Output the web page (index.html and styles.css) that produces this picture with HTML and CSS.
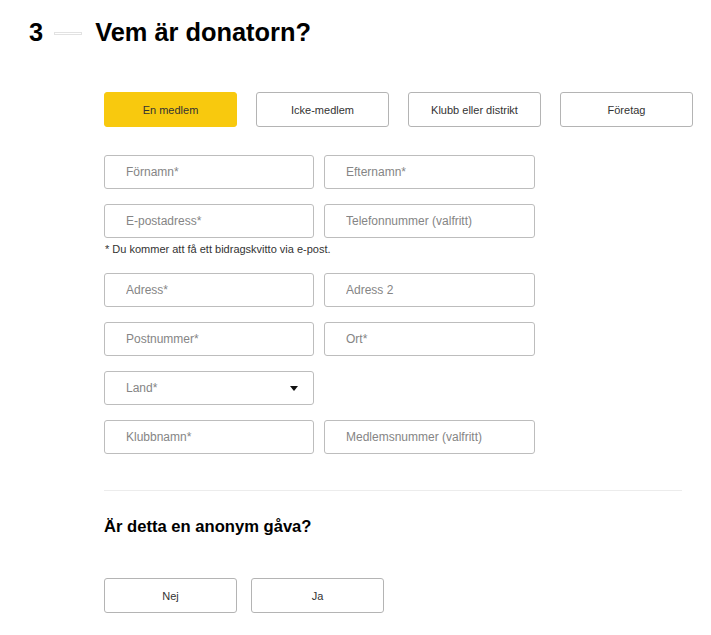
FILE: index.html
```html
<!DOCTYPE html>
<html>
<head>
  <link rel="stylesheet" href="styles.css">
</head>
<body>
  <div class="step">
    <span class="step-num">3</span>
    <span class="step-line"></span>
    <h1>Vem är donatorn?</h1>
  </div>

  <div class="form">
    <div class="tabs">
      <button class="tab active">En medlem</button>
      <button class="tab">Icke-medlem</button>
      <button class="tab">Klubb eller distrikt</button>
      <button class="tab">Företag</button>
    </div>

    <div class="row">
      <input type="text" class="field" placeholder="Förnamn*">
      <input type="text" class="field" placeholder="Efternamn*">
    </div>
    <div class="row row-tight">
      <input type="text" class="field" placeholder="E-postadress*">
      <input type="text" class="field" placeholder="Telefonnummer (valfritt)">
    </div>
    <p class="note">* Du kommer att få ett bidragskvitto via e-post.</p>
    <div class="row">
      <input type="text" class="field" placeholder="Adress*">
      <input type="text" class="field" placeholder="Adress 2">
    </div>
    <div class="row">
      <input type="text" class="field" placeholder="Postnummer*">
      <input type="text" class="field" placeholder="Ort*">
    </div>
    <div class="row">
      <div class="field select">
        <span>Land*</span>
        <span class="caret"></span>
      </div>
    </div>
    <div class="row">
      <input type="text" class="field" placeholder="Klubbnamn*">
      <input type="text" class="field" placeholder="Medlemsnummer (valfritt)">
    </div>

    <hr class="divider">

    <h2>Är detta en anonym gåva?</h2>
    <div class="choices">
      <button class="tab">Nej</button>
      <button class="tab">Ja</button>
    </div>
  </div>
</body>
</html>
```
FILE: styles.css
```css
body {
  margin: 0;
  background: #fff;
  font-family: "Liberation Sans", Arial, sans-serif;
  color: #000;
}

.step {
  display: flex;
  align-items: center;
  padding: 17px 0 0 29px;
  height: 30px;
}
.step-num {
  font-size: 25.4px;
  font-weight: bold;
  line-height: 30px;
}
.step-line {
  width: 26px;
  height: 1px;
  border: 1px solid #e2e2e2;
  margin: 2px 13px 0 11px;
}
h1 {
  margin: 0;
  font-size: 25.4px;
  line-height: 30px;
}

.form {
  padding: 45px 0 0 104px;
  width: 590px;
}

.tabs {
  display: flex;
  gap: 19px;
  margin-bottom: 28px;
}
.tab {
  flex-shrink: 0;
  width: 133px;
  height: 35px;
  border: 1px solid #b4b4b4;
  border-radius: 3px;
  background: #fff;
  font-family: "Liberation Sans", Arial, sans-serif;
  font-size: 11px;
  color: #333;
  padding: 0;
}
.tab.active {
  background: #f8c90e;
  border-color: #f8c90e;
}

.row {
  display: flex;
  gap: 10px;
  margin-bottom: 15px;
}
.row-tight {
  margin-bottom: 0;
}
.field {
  box-sizing: border-box;
  width: 210px;
  height: 34px;
  border: 1px solid #bdbdbd;
  border-radius: 3px;
  padding: 0 0 0 21px;
  font-family: "Liberation Sans", Arial, sans-serif;
  font-size: 12px;
  color: #333;
}
.row .field + .field {
  width: 211px;
}
.field::placeholder {
  color: #858585;
}
.select {
  display: flex;
  align-items: center;
  justify-content: space-between;
  padding-right: 15px;
  color: #858585;
}
.caret {
  width: 0;
  height: 0;
  border-left: 4px solid transparent;
  border-right: 4px solid transparent;
  border-top: 5px solid #111;
}

.note {
  margin: 5px 0 17px 1px;
  font-size: 11px;
  line-height: 13px;
  color: #333;
}

.divider {
  border: 0;
  border-top: 1px solid #ececec;
  margin: 36px 0 0;
  width: 578px;
}

h2 {
  margin: 26px 0 0;
  font-size: 16.6px;
  line-height: 20px;
}

.choices {
  display: flex;
  gap: 14px;
  margin-top: 41px;
}
```
